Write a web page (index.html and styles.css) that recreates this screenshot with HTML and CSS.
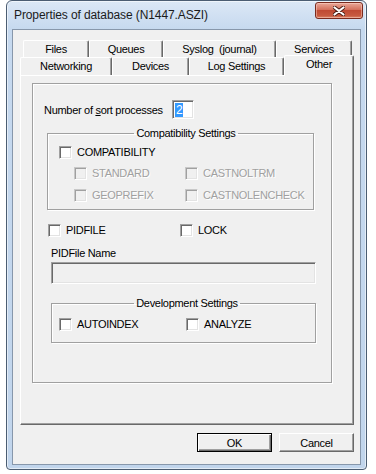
FILE: index.html
```html
<!DOCTYPE html>
<html>
<head>
  <title>Properties of database (N1447.ASZI)</title>
  <link rel="stylesheet" href="styles.css">
</head>
<body>
  <div class="window">
    <div class="titlebar">
      <span class="title">Properties of database (N1447.ASZI)</span>
      <div class="close-btn">
        <svg width="12" height="10" viewBox="0 0 12 10">
          <path d="M1.5 1.5 L10.5 8.5 M10.5 1.5 L1.5 8.5" stroke="#4a1d14" stroke-width="4" stroke-linecap="round"/>
          <path d="M1.5 1.5 L10.5 8.5 M10.5 1.5 L1.5 8.5" stroke="#fff" stroke-width="2.2" stroke-linecap="round"/>
        </svg>
      </div>
    </div>

    <div class="client">
      <div class="tabs">
        <div class="tab-row back">
          <div class="tab tab-files">Files</div>
          <div class="tab tab-queues">Queues</div>
          <div class="tab tab-syslog">Syslog&nbsp; (journal)</div>
          <div class="tab tab-services">Services</div>
        </div>
        <div class="tab-row front">
          <div class="tab tab-networking">Networking</div>
          <div class="tab tab-devices">Devices</div>
          <div class="tab tab-logs">Log Settings</div>
          <div class="tab tab-other active">Other</div>
        </div>

        <div class="panel">
          <div class="page">
            <div class="sort-row">
              <span class="sort-label">Number of <u>s</u>ort processes</span>
              <div class="edit small"><span class="sel">2</span></div>
            </div>

            <fieldset class="group compat">
              <legend>Compatibility Settings</legend>
              <div class="check">
                <span class="cb"></span>
                <span>COMPATIBILITY</span>
              </div>
              <div class="compat-sub">
                <div class="check disabled"><span class="cb"></span><span>STANDARD</span></div>
                <div class="check disabled"><span class="cb"></span><span>CASTNOLTRM</span></div>
                <div class="check disabled"><span class="cb"></span><span>GEOPREFIX</span></div>
                <div class="check disabled"><span class="cb"></span><span>CASTNOLENCHECK</span></div>
              </div>
            </fieldset>

            <div class="pid-row">
              <div class="check pid-col"><span class="cb"></span><span>PIDFILE</span></div>
              <div class="check"><span class="cb"></span><span>LOCK</span></div>
            </div>

            <div class="pid-label">PIDFile Name</div>
            <div class="edit wide disabled"></div>

            <fieldset class="group dev">
              <legend>Development Settings</legend>
              <div class="dev-row">
                <div class="check dev-col"><span class="cb"></span><span>AUTOINDEX</span></div>
                <div class="check"><span class="cb"></span><span>ANALYZE</span></div>
              </div>
            </fieldset>
          </div>
        </div>

        <div class="buttons">
          <button class="btn default">OK</button>
          <button class="btn">Cancel</button>
        </div>
      </div>
    </div>
  </div>
</body>
</html>
```

FILE: styles.css
```css
* {
  box-sizing: border-box;
  margin: 0;
  padding: 0;
}
body {
  background-color: #fff;
  font-family: "Liberation Sans", Arial, sans-serif;
  font-size: 11px;
  letter-spacing: -0.3px;
  color: #000;
}

/* window frame */
.window {
  margin-left: 6px;
  width: 361px;
  height: 470px;
  border: 1px solid #4b5d72;
  border-radius: 6px 6px 4px 4px;
  background: linear-gradient(#dce8f6, #c6d9ef 28px, #c1d5ec);
  box-shadow: inset 0 0 0 1px rgba(255, 255, 255, 0.55);
  display: flex;
  flex-direction: column;
}
.titlebar {
  height: 28px;
  display: flex;
  justify-content: space-between;
  align-items: flex-start;
  padding-left: 7px;
}
.title {
  font-size: 12px;
  letter-spacing: -0.1px;
  line-height: 28px;
  color: #1b1b1b;
}
.close-btn {
  width: 48px;
  height: 17px;
  margin-top: 1px;
  margin-right: 3px;
  border: 1px solid #7b2b1e;
  border-radius: 3px;
  background: linear-gradient(#eaa898, #d4705c 45%, #c04a33 50%, #c75a40 85%, #de8a6a);
  box-shadow: inset 0 0 0 1px rgba(255, 220, 210, 0.45);
  display: flex;
  align-items: center;
  justify-content: center;
}

.client {
  height: 436px;
  margin: 0 5px 4px 5px;
  border: 1px solid #8797ab;
  background-color: #f0f0f0;
  padding: 10px 6px 0 7px;
}

/* tabs */
.tab-row {
  display: flex;
  align-items: flex-end;
}
.tab-row.back {
  height: 17px;
  padding-left: 3px;
}
.tab-row.front {
  height: 18px;
}
.tab {
  height: 18px;
  line-height: 17px;
  text-align: center;
  background-color: #f0f0f0;
  border-top: 1px solid #fff;
  border-left: 1px solid #fff;
  border-right: 1px solid #696969;
  box-shadow: inset -1px 0 #a0a0a0;
  border-radius: 2px 2px 0 0;
}
.tab-row.back .tab {
  height: 17px;
  line-height: 17px;
}
.tab-files { width: 66px; }
.tab-queues { width: 74px; }
.tab-syslog { width: 113px; }
.tab-services { width: 76px; }
.tab-networking { width: 92px; }
.tab-devices { width: 77px; }
.tab-logs { width: 95px; }
.tab-other { width: 70px; }
.tab.active {
  position: relative;
  z-index: 2;
  height: 21px;
  line-height: 17px;
  margin-top: -2px;
  margin-bottom: -1px;
}

.panel {
  height: 350px;
  border-top: 1px solid #fff;
  border-left: 1px solid #fff;
  border-right: 1px solid #696969;
  border-bottom: 1px solid #696969;
  box-shadow: inset -1px -1px #a0a0a0;
  padding: 7px 0 0 11px;
}
.page {
  width: 300px;
  height: 300px;
  border: 1px solid #a0a0a0;
  box-shadow: inset 1px 1px #fff, 1px 1px #fff;
}

/* controls */
.sort-row {
  display: flex;
  align-items: center;
  margin-top: 16px;
  padding-left: 11px;
}
.sort-label {
  width: 128px;
}
.edit {
  background-color: #fff;
  border: 1px solid;
  border-color: #a0a0a0 #fff #fff #a0a0a0;
  box-shadow: inset 1px 1px #696969, inset -1px -1px #e3e3e3;
}
.edit.small {
  width: 22px;
  height: 19px;
  padding: 2px 0 0 2px;
}
.edit.disabled {
  background-color: #f0f0f0;
}
.edit.wide {
  width: 265px;
  height: 22px;
  margin: 2px 0 0 18px;
}
.sel {
  display: inline-block;
  height: 14px;
  line-height: 14px;
  padding: 0 1px 0 1px;
  background-color: #3399ff;
  color: #fff;
  font-size: 12px;
}

.group {
  border: 1px solid #a0a0a0;
  box-shadow: inset 1px 1px #fff, 1px 1px #fff;
}
.group legend {
  margin: 0 auto;
  padding: 0 2px;
  line-height: 13px;
}
.compat {
  width: 267px;
  margin: 8px 0 0 14px;
  padding: 6px 0 7px 11px;
}
.compat-sub {
  display: grid;
  grid-template-columns: 111px auto;
  row-gap: 9px;
  margin: 8px 0 0 15px;
}

.check {
  display: flex;
  align-items: center;
  gap: 5px;
  height: 13px;
  line-height: 13px;
}
.cb {
  width: 13px;
  height: 13px;
  flex: none;
  background-color: #fff;
  border: 1px solid;
  border-color: #a0a0a0 #fff #fff #a0a0a0;
  box-shadow: inset 1px 1px #696969, inset -1px -1px #e3e3e3;
}
.check.disabled {
  color: #a0a0a0;
  text-shadow: 1px 1px 0 #fff;
}
.check.disabled .cb {
  background-color: #f0f0f0;
  border-color: #c8c8c8 #fff #fff #c8c8c8;
  box-shadow: inset 1px 1px #a0a0a0, inset -1px -1px #e3e3e3;
}

.pid-row {
  display: flex;
  margin: 14px 0 0 15px;
}
.pid-col {
  width: 132px;
}
.pid-label {
  margin: 10px 0 0 18px;
  line-height: 13px;
}

.dev {
  width: 265px;
  margin: 13px 0 0 18px;
  padding: 8px 0 11px 7px;
}
.dev-row {
  display: flex;
}
.dev-col {
  width: 127px;
}

/* buttons */
.buttons {
  display: flex;
  justify-content: flex-end;
  gap: 7px;
  margin-top: 8px;
}
.btn {
  width: 75px;
  height: 19px;
  font-family: "Liberation Sans", Arial, sans-serif;
  font-size: 11px;
  letter-spacing: -0.3px;
  color: #000;
  background-color: #f0f0f0;
  border: 1px solid;
  border-color: #fff #696969 #696969 #fff;
  box-shadow: inset -1px -1px #a0a0a0;
}
.btn.default {
  border-color: #000;
  box-shadow: inset 1px 1px #fff, inset -1px -1px #696969, inset -2px -2px #a0a0a0;
}
```
